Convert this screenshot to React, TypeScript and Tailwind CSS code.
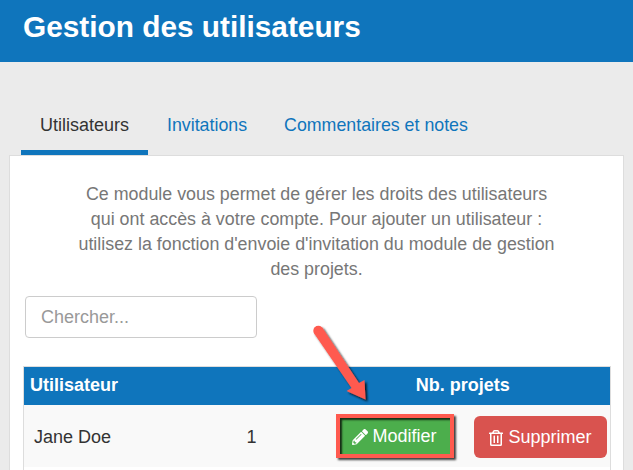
import React from "react";
import { FaPencilAlt, FaRegTrashAlt } from "react-icons/fa";

const App = () => {
  return (
    <div className="h-[470px] w-[633px] overflow-hidden bg-[#ebebeb] font-['Liberation_Sans',Arial,sans-serif] text-[#333]">
      <header className="flex h-[62px] items-start bg-[#0f75bc] pl-[23px] pt-[9px]">
        <h1 className="text-[29.8px] font-bold leading-[36px] text-white">Gestion des utilisateurs</h1>
      </header>

      <nav className="ml-[21px] mt-[44px] flex h-[49px] items-start text-[18px] leading-[38px]">
        <div className="h-[49px] w-[127px] border-b-[5px] border-[#0f75bc] text-center">Utilisateurs</div>
        <a className="ml-[19px] text-[17.8px] text-[#0f75bc]">Invitations</a>
        <a className="ml-[37px] text-[17.8px] text-[#0f75bc]">Commentaires et notes</a>
      </nav>

      <main className="relative ml-[9px] h-[320px] w-[615px] border border-[#ddd] bg-white text-[18px]">
        <p className="mx-auto mt-[26px] w-[485px] text-center text-[17.85px] leading-[25px] text-[#777]">
          Ce module vous permet de gérer les droits des utilisateurs qui ont accès à votre compte. Pour ajouter un utilisateur : utilisez la fonction d'envoie d'invitation du module de gestion des projets.
        </p>

        <input
          placeholder="Chercher..."
          className="ml-[15px] mt-[14px] block h-[42px] w-[232px] rounded-[4px] border border-[#ccc] px-[15px] placeholder:text-[#999]"
        />

        <table className="ml-[13px] mt-[28px] w-[588px] table-fixed border border-[#ddd]">
          <colgroup>
            <col className="w-[202px]" />
            <col className="w-[52px]" />
            <col />
          </colgroup>
          <thead>
            <tr className="h-[38px] bg-[#0f75bc] font-bold text-white">
              <th className="pl-[6px] text-left">Utilisateur</th>
              <th></th>
              <th className="pl-[38px] text-center">Nb. projets</th>
            </tr>
          </thead>
          <tbody>
            <tr className="h-[62px] bg-[#f9f9f9]">
              <td className="pl-[10px] pt-[3px]">Jane Doe</td>
              <td className="pt-[3px] text-center">1</td>
              <td className="pl-[58px]">
                <div className="flex items-end gap-[20px]">
                  <button className="flex h-[44px] w-[118px] items-center justify-center gap-[4px] border-[4px] border-[#ff5a4f] bg-[#4cae4c] pt-[2px] text-white shadow-[2px_2px_2px_rgba(0,0,0,0.75),inset_2px_2px_2px_rgba(0,0,0,0.75)]">
                    <FaPencilAlt className="h-[16px] w-[16px]" />
                    Modifier
                  </button>
                  <button className="flex h-[42px] w-[133px] items-center justify-center gap-[4px] rounded-[6px] bg-[#d9534f] pt-[2px] text-white">
                    <FaRegTrashAlt className="h-[16px] w-[16px]" />
                    Supprimer
                  </button>
                </div>
              </td>
            </tr>
            <tr className="h-[40px]">
              <td colSpan={3}></td>
            </tr>
          </tbody>
        </table>

        {/* annotation arrow over the table */}
        <svg className="absolute left-[295px] top-[162px]" width="75" height="90" viewBox="0 0 75 90">
          <defs>
            <filter id="sh" x="-30%" y="-30%" width="160%" height="160%">
              <feDropShadow dx="2" dy="2" stdDeviation="1.2" floodColor="#000" floodOpacity="0.8" />
            </filter>
          </defs>
          <g filter="url(#sh)">
            <circle cx="13.3" cy="12.7" r="5" fill="#ff5a4f" />
            <path d="M17.4 9.8 L54 65 L59.5 62 L60.5 81.5 L41.5 73 L46.5 70 L9.2 15.6 Z" fill="#ff5a4f" />
          </g>
        </svg>
      </main>
    </div>
  );
};

export default App;
